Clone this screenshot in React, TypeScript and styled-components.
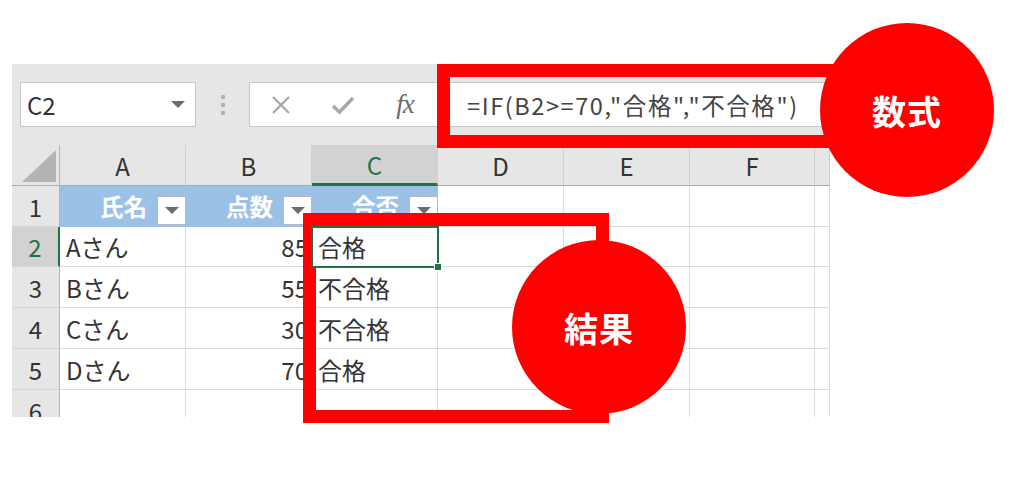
import React from "react";
import styled, { createGlobalStyle } from "styled-components";

const GlobalStyle = createGlobalStyle`
  html, body {
    margin: 0;
    padding: 0;
    background: #fff;
  }
  body {
    font-family: "Noto Sans CJK JP", "Noto Sans", sans-serif;
  }
`;

const Stage = styled.div`
  position: relative;
  width: 1024px;
  height: 493px;
  padding: 64px 0 0 12px;
  box-sizing: border-box;
  overflow: hidden;
`;

const Sheet = styled.div`
  width: 818px;
  height: 353px;
  background: #e6e6e6;
  overflow: hidden;
  display: flex;
  flex-direction: column;
`;

const Toolbar = styled.div`
  height: 81px;
  flex-shrink: 0;
  display: flex;
  align-items: center;
  padding: 0 5px 0 8px;
`;

const NameBox = styled.div`
  width: 176px;
  height: 45px;
  box-sizing: border-box;
  background: #fff;
  border: 1px solid #c6c6c6;
  display: flex;
  align-items: center;
  justify-content: space-between;
  padding: 0 10px 0 6px;
  font-size: 24px;
  color: #333;
`;

const Caret = styled.span`
  width: 0;
  height: 0;
  border-left: 7px solid transparent;
  border-right: 7px solid transparent;
  border-top: 7px solid #6d6d6d;
`;

const Grip = styled.div`
  width: 53px;
  display: flex;
  flex-direction: column;
  align-items: center;
  gap: 4px;
  span {
    width: 4px;
    height: 4px;
    border-radius: 1px;
    background: #b0b0b0;
  }
`;

const FormulaBar = styled.div`
  flex: 1;
  height: 45px;
  box-sizing: border-box;
  background: #fff;
  border: 1px solid #c6c6c6;
  display: flex;
  align-items: center;
`;

const IconSlot = styled.div`
  width: 62px;
  display: flex;
  align-items: center;
  justify-content: center;
`;

const Fx = styled.span`
  font-family: "Liberation Serif", "DejaVu Serif", serif;
  font-style: italic;
  font-size: 27px;
  color: #6a6a6a;
  letter-spacing: -1px;
`;

const FormulaText = styled.div`
  padding-left: 31px;
  font-size: 23.5px;
  letter-spacing: 1.6px;
  color: #444;
  white-space: nowrap;
`;

const Grid = styled.div`
  display: grid;
  grid-template-columns: 48px repeat(5, 126px) 125px 15px;
  grid-template-rows: 41px 41px 40px 41px 41px 41px 41px;
`;

const Corner = styled.div`
  position: relative;
  border-right: 1px solid #b5b5b5;
  border-bottom: 1px solid #ababab;
  box-sizing: border-box;
  &::after {
    content: "";
    position: absolute;
    right: 3px;
    bottom: 3px;
    width: 0;
    height: 0;
    border-left: 34px solid transparent;
    border-bottom: 32px solid #b4b4b4;
  }
`;

const ColHeader = styled.div<{ $active?: boolean }>`
  box-sizing: border-box;
  display: flex;
  align-items: center;
  justify-content: center;
  font-size: 24px;
  color: ${(p) => (p.$active ? "#217346" : "#333")};
  background: ${(p) => (p.$active ? "#d2d2d2" : "#e6e6e6")};
  border-right: 1px solid #cfcfcf;
  border-bottom: ${(p) => (p.$active ? "3px solid #217346" : "1px solid #ababab")};
`;

const RowHeader = styled.div<{ $active?: boolean }>`
  box-sizing: border-box;
  display: flex;
  align-items: center;
  justify-content: center;
  font-size: 24px;
  color: ${(p) => (p.$active ? "#217346" : "#333")};
  background: ${(p) => (p.$active ? "#d2d2d2" : "#e6e6e6")};
  border-bottom: 1px solid #d4d4d4;
  border-right: ${(p) => (p.$active ? "2px solid #217346" : "1px solid #b5b5b5")};
`;

const Cell = styled.div<{ $align?: "left" | "right"; $selected?: boolean }>`
  position: relative;
  box-sizing: border-box;
  background: #fff;
  border-right: 1px solid #dadada;
  border-bottom: 1px solid #dadada;
  display: flex;
  align-items: center;
  justify-content: ${(p) => (p.$align === "right" ? "flex-end" : "flex-start")};
  padding: 0 3px 0 6px;
  font-size: 24px;
  color: #333;
  white-space: nowrap;
  ${(p) =>
    p.$selected &&
    `
    z-index: 1;
    &::after {
      content: "";
      position: absolute;
      left: -1px;
      top: -1px;
      right: -2px;
      bottom: -2px;
      border: 2px solid #217346;
    }
    &::before {
      content: "";
      position: absolute;
      right: -5px;
      bottom: -5px;
      width: 6px;
      height: 6px;
      background: #217346;
      border: 1px solid #fff;
      z-index: 2;
    }
  `}
`;

const HeadCell = styled.div`
  box-sizing: border-box;
  background: #9bc2e6;
  display: flex;
  align-items: flex-end;
  justify-content: flex-end;
  padding: 0 0 2px 0;
  gap: 10px;
`;

const HeadLabel = styled.span`
  align-self: center;
  font-size: 23.5px;
  font-weight: 700;
  color: #fff;
`;

const FilterButton = styled.div`
  width: 29px;
  height: 29px;
  box-sizing: border-box;
  background: #fff;
  border: 1px solid #b9b9b9;
  display: flex;
  align-items: center;
  justify-content: center;
  &::after {
    content: "";
    border-left: 7px solid transparent;
    border-right: 7px solid transparent;
    border-top: 7px solid #6d6d6d;
  }
`;

const Frame = styled.div<{ $x: number; $y: number; $w: number; $h: number }>`
  position: absolute;
  left: ${(p) => p.$x}px;
  top: ${(p) => p.$y}px;
  width: ${(p) => p.$w}px;
  height: ${(p) => p.$h}px;
  box-sizing: border-box;
  border: 13px solid #ff0000;
`;

const Badge = styled.div<{ $x: number; $y: number }>`
  position: absolute;
  left: ${(p) => p.$x}px;
  top: ${(p) => p.$y}px;
  width: 174px;
  height: 174px;
  border-radius: 50%;
  background: #ff0000;
  display: flex;
  align-items: center;
  justify-content: center;
  color: #fff;
  font-size: 34px;
  font-weight: 700;
  letter-spacing: 1px;
`;

const rows = [
  { name: "Aさん", score: 85, result: "合格" },
  { name: "Bさん", score: 55, result: "不合格" },
  { name: "Cさん", score: 30, result: "不合格" },
  { name: "Dさん", score: 70, result: "合格" },
];

const cols = ["A", "B", "C", "D", "E", "F", ""];

function App() {
  return (
    <>
      <GlobalStyle />
      <Stage>
        <Sheet>
          <Toolbar>
            <NameBox>
              C2
              <Caret />
            </NameBox>
            <Grip>
              <span />
              <span />
              <span />
            </Grip>
            <FormulaBar>
              <IconSlot>
                <svg width="20" height="20" viewBox="0 0 20 20">
                  <path d="M2 2 L18 18 M18 2 L2 18" stroke="#a8a8a8" strokeWidth="2.2" />
                </svg>
              </IconSlot>
              <IconSlot>
                <svg width="24" height="20" viewBox="0 0 24 20">
                  <path d="M2 11 L8.5 17 L22 3" stroke="#a8a8a8" strokeWidth="3.4" fill="none" />
                </svg>
              </IconSlot>
              <IconSlot>
                <Fx>fx</Fx>
              </IconSlot>
              <FormulaText>=IF(B2&gt;=70,"合格","不合格")</FormulaText>
            </FormulaBar>
          </Toolbar>
          <Grid>
            <Corner />
            {cols.map((c, i) => (
              <ColHeader key={i} $active={c === "C"}>
                {c}
              </ColHeader>
            ))}

            <RowHeader>1</RowHeader>
            <HeadCell>
              <HeadLabel>氏名</HeadLabel>
              <FilterButton />
            </HeadCell>
            <HeadCell>
              <HeadLabel>点数</HeadLabel>
              <FilterButton />
            </HeadCell>
            <HeadCell>
              <HeadLabel>合否</HeadLabel>
              <FilterButton />
            </HeadCell>
            <Cell />
            <Cell />
            <Cell />
            <Cell />

            {rows.map((r, i) => (
              <React.Fragment key={r.name}>
                <RowHeader $active={i === 0}>{i + 2}</RowHeader>
                <Cell>{r.name}</Cell>
                <Cell $align="right">{r.score}</Cell>
                <Cell $selected={i === 0}>{r.result}</Cell>
                <Cell />
                <Cell />
                <Cell />
                <Cell />
              </React.Fragment>
            ))}

            <RowHeader>6</RowHeader>
            {cols.map((c, i) => (
              <Cell key={"r6" + i} />
            ))}
          </Grid>
        </Sheet>

        <Frame $x={437} $y={64} $w={430} $h={84} />
        <Frame $x={303} $y={213} $w={306} $h={210} />
        <Badge $x={820} $y={23}>数式</Badge>
        <Badge $x={512} $y={240}>結果</Badge>
      </Stage>
    </>
  );
}

export default App;
